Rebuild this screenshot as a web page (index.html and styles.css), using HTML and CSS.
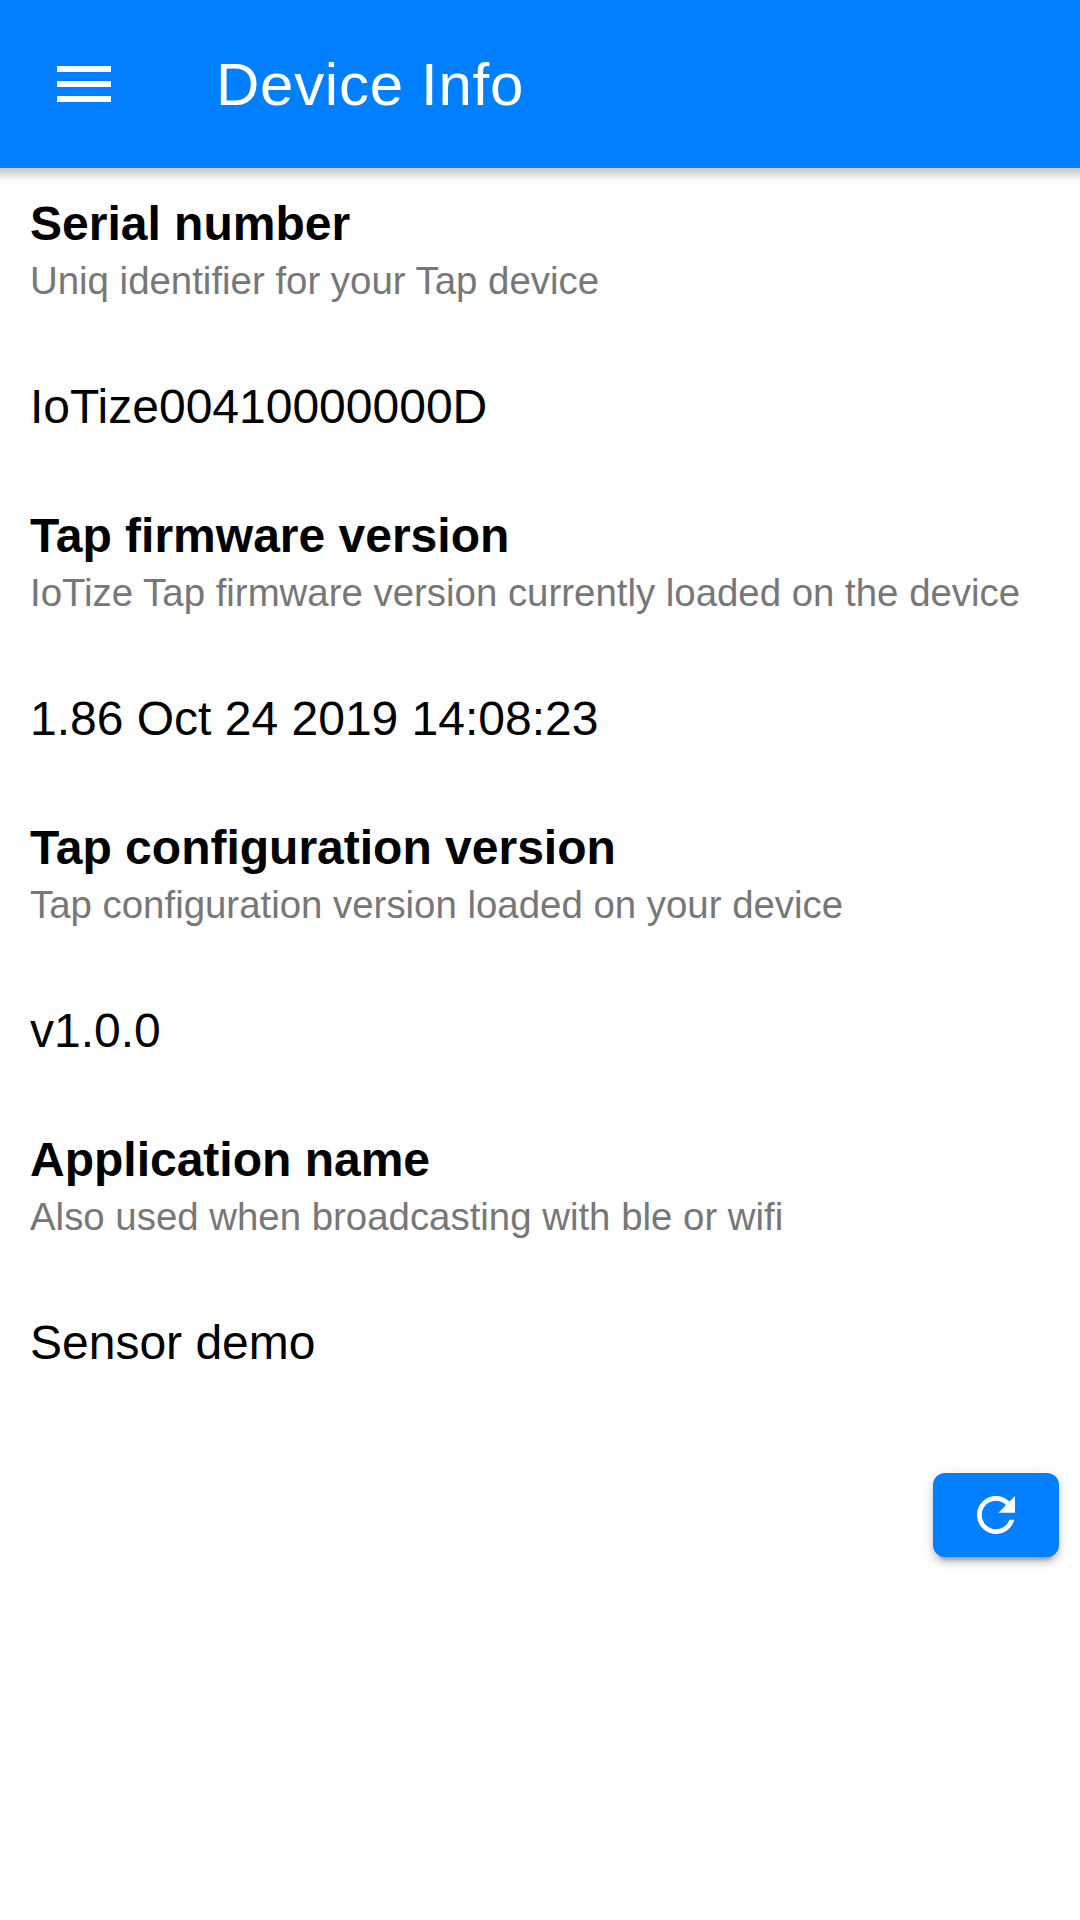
FILE: index.html
```html
<!DOCTYPE html>
<html lang="en">
<head>
<meta charset="utf-8">
<title>Device Info</title>
<link rel="stylesheet" href="styles.css">
</head>
<body>
<header class="toolbar">
  <svg class="menu" viewBox="0 0 54 36" aria-hidden="true"><path d="M0 0h54v6H0zM0 15h54v6H0zM0 30h54v6H0z"/></svg>
  <h1>Device Info</h1>
</header>
<main>
  <section class="item"><h2>Serial number</h2><p class="hint">Uniq identifier for your Tap device</p><p class="value">IoTize00410000000D</p></section>
  <section class="item"><h2>Tap firmware version</h2><p class="hint">IoTize Tap firmware version currently loaded on the device</p><p class="value">1.86 Oct 24 2019 14:08:23</p></section>
  <section class="item"><h2>Tap configuration version</h2><p class="hint">Tap configuration version loaded on your device</p><p class="value">v1.0.0</p></section>
  <section class="item"><h2>Application name</h2><p class="hint">Also used when broadcasting with ble or wifi</p><p class="value">Sensor demo</p></section>
  <div class="actions">
    <button class="refresh" aria-label="Refresh"><svg viewBox="4 4 16 16" aria-hidden="true"><path d="M17.65 6.35A7.96 7.96 0 0 0 12 4a8 8 0 1 0 7.73 10h-2.08A6 6 0 1 1 12 6c1.66 0 3.14.69 4.22 1.78L13 11h7V4z"/></svg></button>
  </div>
</main>
</body>
</html>
```
FILE: styles.css
```css
* { box-sizing: border-box; }
body { margin: 0; min-height: 100vh; background: #fff; color: #000; font-family: "Liberation Sans", Arial, sans-serif; }
h1, h2, p { margin: 0; }
.toolbar { height: 168px; display: flex; align-items: center; padding-left: 57px; background: #0080ff; color: #fff; }
.menu { width: 54px; height: 36px; fill: #fff; }
h1 { margin-left: 105px; padding-top: 2px; font-size: 60px; font-weight: 400; line-height: 72px; letter-spacing: .72px; }
main { min-height: 1752px; padding-top: 25px; background: linear-gradient(#cdcdcd 0, #cdcdcd 2px, #e6e6e6 7px, #f8f8f8 12px, #fff 17px) top / 100% 17px no-repeat; }
.item { height: 312px; padding: 0 30px; white-space: nowrap; }
h2 { font-size: 48px; line-height: 62px; }
.hint { font-size: 38.4px; line-height: 52px; color: #777; }
.value { margin-top: 70px; font-size: 48px; line-height: 60px; }
.actions { display: flex; justify-content: flex-end; padding: 32px 21px 0; }
.refresh { width: 126px; height: 84px; display: flex; align-items: center; justify-content: center; padding: 0; border: 0; border-radius: 12px; background: #0080ff; box-shadow: 0 9px 3px -6px rgba(0,0,0,.2), 0 6px 6px rgba(0,0,0,.14), 0 3px 15px rgba(0,0,0,.12); }
.refresh svg { width: 38px; height: 38px; fill: #fff; }
```
